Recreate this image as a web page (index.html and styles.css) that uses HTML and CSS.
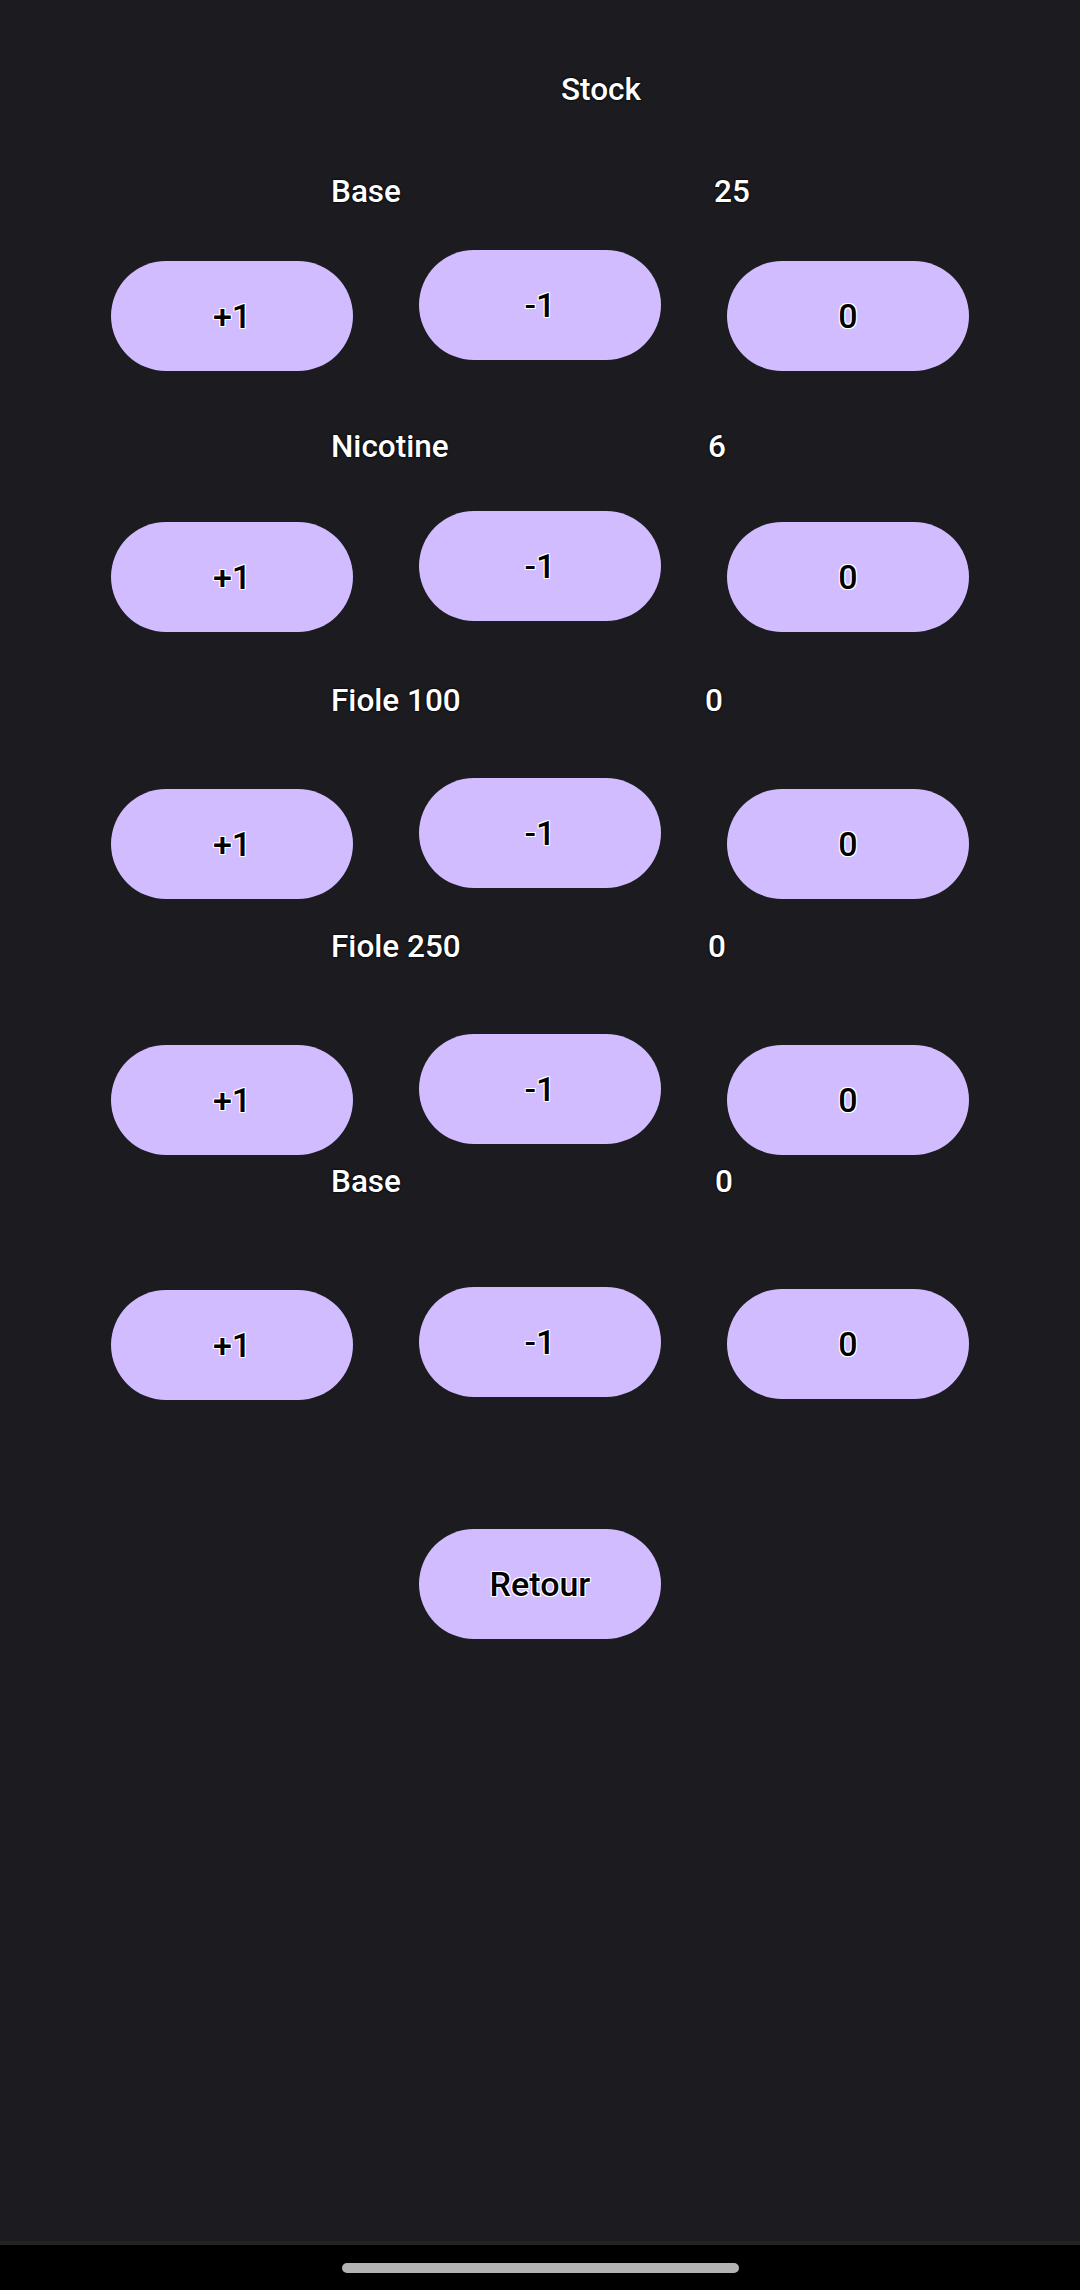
FILE: index.html
```html
<!DOCTYPE html>
<html lang="fr">
<head>
<meta charset="utf-8">
<title>Stock</title>
<link rel="stylesheet" href="styles.css">
</head>
<body>
<div class="screen">
  <div class="title">Stock</div>

  <section class="group g1">
    <div class="label-row"><span class="name">Base</span><span class="value v1">25</span></div>
    <div class="buttons">
      <button class="btn side">+1</button>
      <button class="btn">-1</button>
      <button class="btn side">0</button>
    </div>
  </section>

  <section class="group g2">
    <div class="label-row"><span class="name">Nicotine</span><span class="value v2">6</span></div>
    <div class="buttons">
      <button class="btn side">+1</button>
      <button class="btn">-1</button>
      <button class="btn side">0</button>
    </div>
  </section>

  <section class="group g3">
    <div class="label-row"><span class="name">Fiole 100</span><span class="value v3">0</span></div>
    <div class="buttons">
      <button class="btn side">+1</button>
      <button class="btn">-1</button>
      <button class="btn side">0</button>
    </div>
  </section>

  <section class="group g4">
    <div class="label-row"><span class="name">Fiole 250</span><span class="value v4">0</span></div>
    <div class="buttons">
      <button class="btn side">+1</button>
      <button class="btn">-1</button>
      <button class="btn side">0</button>
    </div>
  </section>

  <section class="group g5">
    <div class="label-row"><span class="name">Base</span><span class="value v5">0</span></div>
    <div class="buttons">
      <button class="btn side-low">+1</button>
      <button class="btn">-1</button>
      <button class="btn side-mid">0</button>
    </div>
  </section>

  <div class="back-row">
    <button class="btn">Retour</button>
  </div>
</div>
<div class="navbar"><div class="handle"></div></div>
</body>
</html>
```

FILE: styles.css
```css
* { box-sizing: border-box; }

html, body {
  margin: 0;
  padding: 0;
  background: #000;
}

body {
  width: 1080px;
  height: 2290px;
  overflow: hidden;
  font-family: Roboto, "Noto Sans", sans-serif;
}

.screen {
  height: 2241px;
  background: #1c1b1f;
  padding-top: 71px;
  display: flex;
  flex-direction: column;
}

.title {
  padding-left: 561px;
  font-size: 31.5px;
  font-weight: 500;
  line-height: 37px;
  color: #fff;
  text-shadow: 0 0 2px #000, 0 0 2px #000;
}

.label-row {
  display: flex;
  padding-left: 331px;
  font-size: 31.5px;
  font-weight: 500;
  line-height: 37px;
  color: #fff;
  text-shadow: 0 0 2px #000, 0 0 2px #000;
}

.name { width: 374px; }
.v1 { padding-left: 9px; }
.v2 { padding-left: 3px; }
.v3 { padding-left: 0; }
.v4 { padding-left: 3px; }
.v5 { padding-left: 10px; }

.buttons {
  display: flex;
  align-items: flex-start;
  justify-content: center;
  gap: 66px;
}

.btn {
  width: 242px;
  height: 110px;
  border: none;
  border-radius: 55px;
  background: #d0bcff;
  padding: 0;
  font-family: Roboto, "Noto Sans", sans-serif;
  font-size: 34px;
  font-weight: 500;
  color: #000;
  text-shadow: -1px -1px 0 #fff, 1px -1px 0 #fff, -1px 1px 0 #fff, 1px 1px 0 #fff, 0 0 2px #fff;
}

.side { margin-top: 11px; }
.side-low { margin-top: 3px; }
.side-mid { margin-top: 2px; }

.g1 { margin-top: 65px; }
.g1 .buttons { margin-top: 40px; }
.g2 { margin-top: 56.5px; }
.g2 .buttons { margin-top: 46.5px; }
.g3 { margin-top: 49.5px; }
.g3 .buttons { margin-top: 59.5px; }
.g4 { margin-top: 28.5px; }
.g4 .buttons { margin-top: 69.5px; }
.g5 { margin-top: 8px; }
.g5 .buttons { margin-top: 87px; }

.back-row {
  margin-top: 129px;
  display: flex;
  justify-content: center;
}

.navbar {
  height: 49px;
  background: #000;
  border-top: 4px solid #242424;
  display: flex;
  justify-content: center;
  padding-top: 18px;
}

.handle {
  width: 397px;
  height: 10px;
  border-radius: 5px;
  background: #b3b3b3;
}
```
